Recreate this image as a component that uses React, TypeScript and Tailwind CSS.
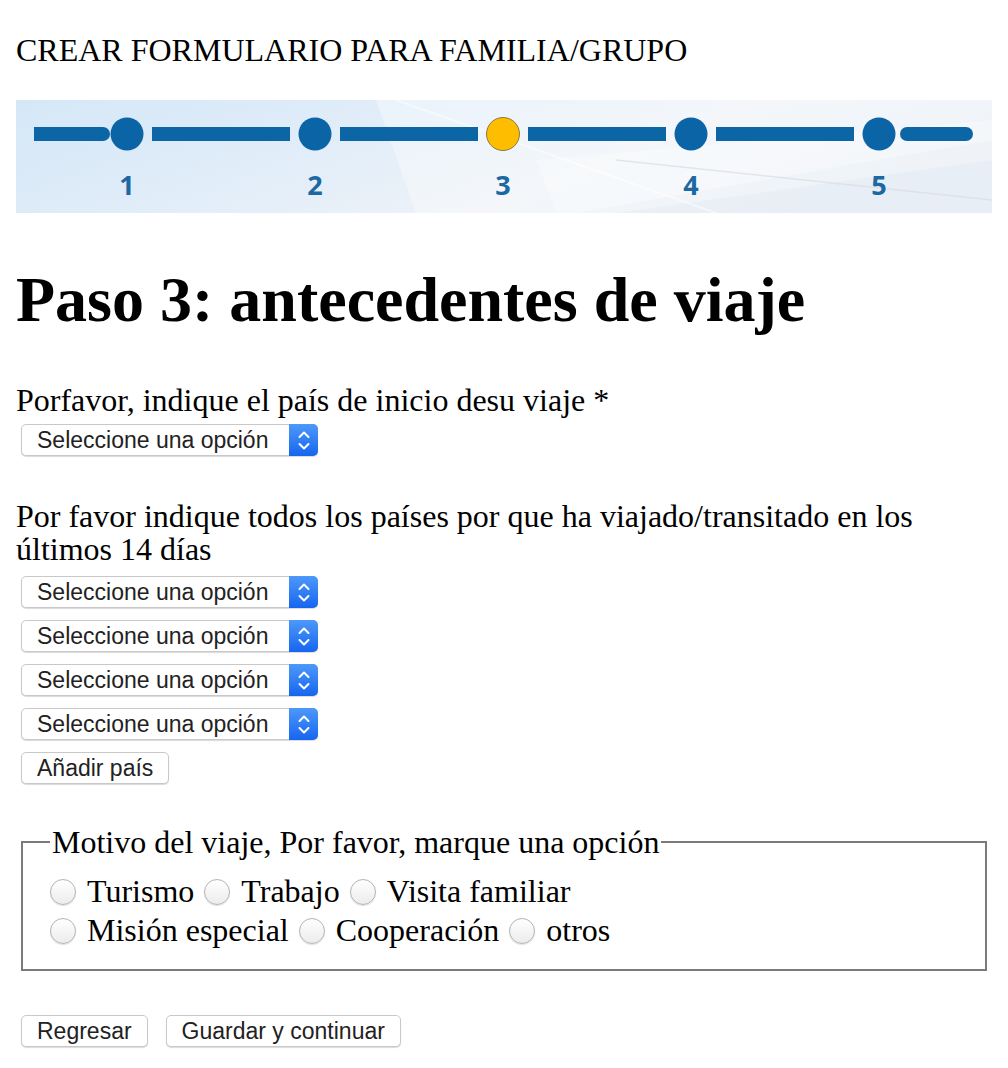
import React from "react";

const sans = { fontFamily: '"Liberation Sans", Arial, sans-serif' };

function Stepper() {
  const xs = [111, 299, 487, 675, 863];
  return (
    <svg width="976" height="113" viewBox="0 0 976 113" className="block">
      <defs>
        <linearGradient id="bg" x1="0" y1="0" x2="1" y2="0.3">
          <stop offset="0" stopColor="#d5e7f7" />
          <stop offset="0.45" stopColor="#e3eef9" />
          <stop offset="0.7" stopColor="#eef2f7" />
          <stop offset="1" stopColor="#e8eef5" />
        </linearGradient>
      </defs>
      <rect width="976" height="113" fill="url(#bg)" />
      {/* ala del avión, apenas visible */}
      <polygon points="360,0 976,0 976,40 560,113 400,113" fill="#ffffff" opacity="0.35" />
      <polygon points="520,60 976,20 976,60 600,113 540,113" fill="#ffffff" opacity="0.3" />
      <line x1="380" y1="0" x2="700" y2="113" stroke="#ffffff" strokeWidth="2" opacity="0.5" />
      <line x1="600" y1="60" x2="976" y2="100" stroke="#d9dee6" strokeWidth="1.5" opacity="0.7" />
      {/* barra */}
      <line x1="25" y1="34" x2="87" y2="34" stroke="#0c66a6" strokeWidth="14" strokeLinecap="round" />
      {xs.slice(0, 4).map((x, i) => (
        <rect key={i} x={x + 25} y="27" width={188 - 50} height="14" fill="#0c66a6" />
      ))}
      <line x1="891" y1="34" x2="950" y2="34" stroke="#0c66a6" strokeWidth="14" strokeLinecap="round" />
      <rect x="18" y="27" width="7" height="14" fill="#0c66a6" />
      {xs.map((x, i) =>
        i === 2 ? (
          <circle key={i} cx={x} cy="34" r="16.5" fill="#ffbd00" stroke="#8a7b45" strokeWidth="1" />
        ) : (
          <circle key={i} cx={x} cy="34" r="16.5" fill="#0a64a5" />
        )
      )}
      {xs.map((x, i) => (
        <text
          key={i}
          x={x}
          y="95"
          textAnchor="middle"
          fontFamily="'Open Sans', sans-serif"
          fontWeight="700"
          fontSize="27"
          fill="#1c68a3"
        >
          {i + 1}
        </text>
      ))}
    </svg>
  );
}

function Select() {
  return (
    <div
      className="flex h-[32px] w-[297px] items-stretch rounded-[5px] border border-[#c9c9c9] bg-white shadow-[0_1px_1px_rgba(0,0,0,0.15)]"
      style={sans}
    >
      <span className="flex-1 pl-[15px] text-[23px] leading-[30px] text-[#222]">
        Seleccione una opción
      </span>
      <span className="-my-px -mr-px flex w-[29px] items-center justify-center rounded-r-[5px] bg-gradient-to-b from-[#4d98fa] to-[#1565ef]">
        <svg width="12" height="21" viewBox="0 0 12 21" fill="none" stroke="#fff" strokeWidth="2" strokeLinecap="round" strokeLinejoin="round">
          <path d="M1.5 7 L6 2.5 L10.5 7" />
          <path d="M1.5 14 L6 18.5 L10.5 14" />
        </svg>
      </span>
    </div>
  );
}

function Button({ children }: { children: React.ReactNode }) {
  return (
    <button
      className="h-[32px] rounded-[5px] border border-[#c9c9c9] bg-white px-[15px] text-[23px] leading-[30px] text-[#222] shadow-[0_1px_1px_rgba(0,0,0,0.15)]"
      style={sans}
    >
      {children}
    </button>
  );
}

function Radio({ label }: { label: string }) {
  return (
    <span className="flex items-center">
      <span className="h-[26px] w-[26px] rounded-full border border-[#b4b4b4] bg-gradient-to-b from-white to-[#ececec] shadow-[0_1px_1px_rgba(0,0,0,0.12)]" />
      <span className="ml-[11px] mr-[10px]">{label}</span>
    </span>
  );
}

export default function App() {
  return (
    <div
      className="px-4 pb-[21px] text-[32px] leading-[33px] text-black"
      style={{ fontFamily: '"Liberation Serif", "Times New Roman", serif' }}
    >
      <p className="pt-[34px] leading-[32px]">CREAR FORMULARIO PARA FAMILIA/GRUPO</p>

      <div className="mt-[34px] h-[113px]">
        <Stepper />
      </div>

      <h1 className="mt-[55px] text-[64px] font-bold leading-[64px]">
        Paso 3: antecedentes de viaje
      </h1>

      <p className="mt-[52px] leading-[32px]">Porfavor, indique el país de inicio desu viaje *</p>
      <div className="ml-[5px] mt-[8px]">
        <Select />
      </div>

      <p className="mt-[44px]">
        Por favor indique todos los países por que ha viajado/transitado en los
        últimos 14 días
      </p>
      <div className="ml-[5px] mt-[10px] flex flex-col gap-[12px]">
        <Select />
        <Select />
        <Select />
        <Select />
      </div>
      <div className="ml-[5px] mt-[9px]">
        <Button>Añadir país</Button>
      </div>

      <fieldset className="mx-[5px] mt-[42px] border-2 border-[#7b7b7b] pb-[19px] pl-[27px] pr-[21px]">
        <legend className="px-[2px] leading-[32px]">
          Motivo del viaje, Por favor, marque una opción
        </legend>
        <div className="mt-[14px] flex flex-col">
          <div className="flex h-[39px] items-center">
            <Radio label="Turismo" />
            <Radio label="Trabajo" />
            <Radio label="Visita familiar" />
          </div>
          <div className="flex h-[39px] items-center">
            <Radio label="Misión especial" />
            <Radio label="Cooperación" />
            <Radio label="otros" />
          </div>
        </div>
      </fieldset>

      <div className="ml-[5px] mt-[44px] flex gap-[18px]">
        <Button>Regresar</Button>
        <Button>Guardar y continuar</Button>
      </div>
    </div>
  );
}
